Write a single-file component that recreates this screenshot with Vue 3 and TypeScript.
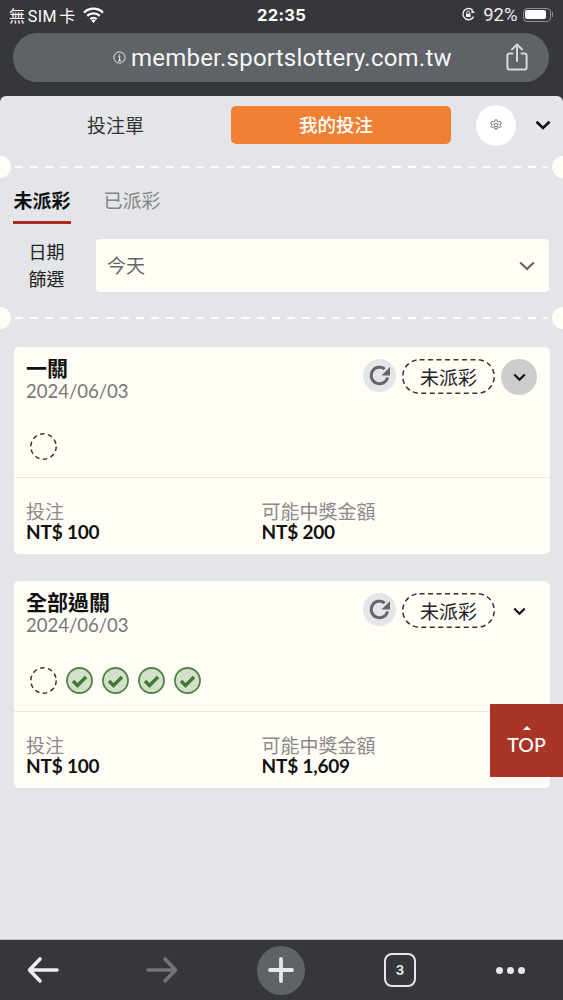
<script setup lang="ts">
interface Card { title: string; date: string; stake: string; prize: string; open: boolean; marks: boolean[] }
const cards: Card[] = [
  { title: '一關', date: '2024/06/03', stake: 'NT$ 100', prize: 'NT$ 200', open: true, marks: [false] },
  { title: '全部過關', date: '2024/06/03', stake: 'NT$ 100', prize: 'NT$ 1,609', open: false, marks: [false, true, true, true, true] },
]
</script>

<template>
  <div class="screen">
    <div class="chrome">
      <div class="status">
        <div class="status-left">
          <span class="carrier">無 SIM 卡</span>
          <svg class="wifi" width="21" height="16" viewBox="0 0 20 15"><path d="M1 5.200a12.800 12.800 0 0 1 18 0M4 8.400a8.600 8.600 0 0 1 12 0M7 11.400a4.300 4.300 0 0 1 6 0" fill="none" stroke="#fff" stroke-width="2.200"/><path d="M10 15l-2-2.200a2.800 2.800 0 0 1 4 0z" fill="#fff"/></svg>
        </div>
        <span class="clock">22:35</span>
        <div class="status-right">
          <svg width="15" height="15" viewBox="0 0 15 15"><path d="M12.600 9.600A5.600 5.600 0 1 1 11.600 3.200" fill="none" stroke="#eee" stroke-width="1.400"/><path d="M14 5.600l-3.600.6.2-3.600z" fill="#eee"/><rect x="5" y="6.500" width="4.600" height="3.600" rx=".6" fill="#eee"/><path d="M5.900 6.500v-1a1.400 1.400 0 0 1 2.800 0v1" fill="none" stroke="#eee"/></svg>
          <span class="pct">92%</span>
          <div class="battery"><div class="battery-fill"></div></div>
          <div class="battery-cap"></div>
        </div>
      </div>
      <div class="address">
        <svg width="13" height="13" viewBox="0 0 13 13" class="info"><circle cx="6.500" cy="6.500" r="5.600" fill="none" stroke="#e8e8e8" stroke-width="1"/><path d="M6.500 3.200v1.200M5.400 5.800h1.200v3.600M5.200 9.600h2.800" fill="none" stroke="#e8e8e8" stroke-width="1.100"/></svg>
        <span class="url">member.sportslottery.com.tw</span>
        <svg class="share" width="22" height="28" viewBox="0 0 22 28"><path d="M6.500 10.500H3.400A2 2 0 0 0 1.400 12.500v12a2 2 0 0 0 2 2h15.200a2 2 0 0 0 2-2v-12a2 2 0 0 0-2-2h-3.100M11 18V2M6 6.400 11 1.500l5 4.900" fill="none" stroke="#d8d9da" stroke-width="2" stroke-linecap="round" stroke-linejoin="round"/></svg>
      </div>
    </div>

    <main class="page">
      <div class="head">
        <span class="head-tab">投注單</span>
        <button class="head-active">我的投注</button>
        <div class="gear">
          <svg width="12" height="12" viewBox="0 0 24 24"><path d="M10 1.800h4l.7 3 2.300 1 2.700-1.600 2.500 3.200-2 2.300v2.600l2 2.300-2.500 3.200-2.700-1.600-2.300 1-.7 3h-4l-.7-3-2.300-1-2.700 1.600-2.500-3.200 2-2.300v-2.600l-2-2.300 2.500-3.200 2.700 1.600 2.300-1z" fill="none" stroke="#666" stroke-width="1.800" stroke-linejoin="round"/><circle cx="12" cy="12" r="3.600" fill="none" stroke="#666" stroke-width="1.800"/></svg>
        </div>
        <svg class="head-chev" width="16" height="10" viewBox="0 0 16 10"><path d="M1.500 1.800 8 8l6.500-6.200" fill="none" stroke="#111" stroke-width="2.600"/></svg>
      </div>

      <div class="perforation"><i class="hole hole-l"></i><i class="dash"></i><i class="hole hole-r"></i></div>

      <div class="tabs">
        <div class="tab tab-on">未派彩</div>
        <div class="tab">已派彩</div>
      </div>

      <div class="filter">
        <div class="filter-label">日期<br />篩選</div>
        <div class="select">
          <span class="select-text">今天</span>
          <svg width="16" height="10" viewBox="0 0 16 10"><path d="M1.200 1.500 8 8l6.800-6.500" fill="none" stroke="#666" stroke-width="2.200"/></svg>
        </div>
      </div>

      <div class="perforation perforation-2"><i class="hole hole-l"></i><i class="dash"></i><i class="hole hole-r"></i></div>

      <section class="cards">
        <article v-for="c in cards" :key="c.title" class="card">
          <div class="card-top">
            <div class="card-heading">
              <div>
                <div class="card-title">{{ c.title }}</div>
                <div class="card-date">{{ c.date }}</div>
              </div>
              <div class="card-actions">
                <div class="refresh">
                  <svg width="24" height="24" viewBox="0 0 24 24"><path d="M19.600 13.500A8.300 8.300 0 1 1 16.700 5" fill="none" stroke="#666" stroke-width="3"/><path d="M22 3v8.500h-8.500z" fill="#666"/></svg>
                </div>
                <div class="pill">
                  <svg class="pill-line" width="93" height="35" viewBox="0 0 93 35"><rect x=".75" y=".75" width="91.500" height="33.500" rx="16.750" fill="none" stroke="#333" stroke-width="1.500" stroke-dasharray="5 3.500"/></svg>
                  <span>未派彩</span>
                </div>
                <div class="toggle" :class="{ 'toggle-on': c.open }">
                  <svg width="13" height="9" viewBox="0 0 13 9"><path d="M1.300 1.500 6.500 6.800l5.200-5.300" fill="none" stroke="#111" stroke-width="2.200"/></svg>
                </div>
              </div>
            </div>
            <div class="marks">
              <template v-for="(m, i) in c.marks" :key="i">
                <svg v-if="m" class="mark" width="27" height="27" viewBox="0 0 27 27"><circle cx="13.500" cy="13.500" r="12.500" fill="#d5e0cb" stroke="#4f8443" stroke-width="1.800"/><path d="M7 14l4.500 4.500 8.500-8.500" fill="none" stroke="#3f7a35" stroke-width="3.400"/></svg>
                <svg v-else class="mark" width="27" height="27" viewBox="0 0 27 27"><circle cx="13.500" cy="13.500" r="12.700" fill="none" stroke="#333" stroke-width="1.500" stroke-dasharray="4.500 3.500"/></svg>
              </template>
            </div>
          </div>
          <div class="card-bottom">
            <div class="cell">
              <div class="cell-label">投注</div>
              <div class="cell-value">{{ c.stake }}</div>
            </div>
            <div class="cell">
              <div class="cell-label">可能中獎金額</div>
              <div class="cell-value">{{ c.prize }}</div>
            </div>
          </div>
        </article>
      </section>
    </main>

    <div class="top-btn">
      <i class="top-arrow"></i>
      <span>TOP</span>
    </div>

    <nav class="toolbar">
      <svg width="34" height="28" viewBox="0 0 34 28"><path d="M31 14H4M14 3 3.500 14 14 25" fill="none" stroke="#eceded" stroke-width="3.600" stroke-linecap="round" stroke-linejoin="round"/></svg>
      <svg width="34" height="28" viewBox="0 0 34 28"><path d="M3 14h27M20 3l10.500 11L20 25" fill="none" stroke="#727476" stroke-width="3.600" stroke-linecap="round" stroke-linejoin="round"/></svg>
      <div class="plus">
        <svg width="26" height="26" viewBox="0 0 26 26"><path d="M13 2v22M2 13h22" stroke="#e6e7e8" stroke-width="3.800" stroke-linecap="round"/></svg>
      </div>
      <div class="tabs-count">3</div>
      <div class="more"><i></i><i></i><i></i></div>
    </nav>
  </div>
</template>

<style scoped>
.screen {
  position: relative;
  width: 563px;
  height: 1000px;
  overflow: hidden;
  display: flex;
  flex-direction: column;
  background: #36373a;
  font-family: "Lato", "Noto Sans CJK TC", sans-serif;
}
.chrome {
  height: 96px;
  flex: none;
  background: #36373a;
  color: #fff;
  font-family: "Inter", "Noto Sans CJK TC", sans-serif;
}
.status {
  height: 33px;
  display: flex;
  align-items: center;
  justify-content: space-between;
  padding: 0 10px 4px 9px;
  box-sizing: border-box;
  position: relative;
}
.status-left { display: flex; align-items: center; gap: 7px; }
.carrier { font-size: 16px; font-family: "Roboto", "Noto Sans CJK TC", sans-serif; white-space: nowrap; word-spacing: -2px; letter-spacing: .4px; }
.clock {
  position: absolute;
  left: 257px;
  top: 5px;
  font-size: 16.500px;
  font-weight: 700;
  letter-spacing: .3px;
  line-height: 20px;
}
.status-right { display: flex; align-items: center; gap: 4px; }
.pct { font-size: 18.500px; margin-left: 3px; font-family: "Roboto", sans-serif; color: #eee; }
.battery {
  width: 28px;
  height: 14px;
  border: 1px solid #8e8f91;
  border-radius: 4px;
  padding: 1.500px;
  box-sizing: border-box;
  margin-left: 1px;
}
.battery-fill { width: 90%; height: 100%; background: #fff; border-radius: 2px; }
.battery-cap { width: 1.500px; height: 5px; background: #8e8f91; margin-left: -3px; }
.address {
  position: relative;
  height: 49px;
  margin: 0 14px 0 13px;
  border-radius: 25px;
  background: #5f6266;
  display: flex;
  align-items: center;
  padding-left: 100px;
  gap: 5px;
}
.url { font-size: 24px; font-family: "Roboto", sans-serif; color: #f6f6f6; white-space: nowrap; letter-spacing: .22px; }
.share { position: absolute; right: 21px; top: 10px; }
.page {
  flex: 1;
  background: #e3e5e8;
  border-radius: 6px 6px 0 0;
  display: flex;
  flex-direction: column;
  min-height: 0;
}
.head {
  height: 60px;
  display: flex;
  align-items: center;
  padding-bottom: 2px;
  box-sizing: border-box;
  flex: none;
}
.head-tab {
  width: 231px;
  padding-bottom: 2px;
  box-sizing: border-box;
  text-align: center;
  font-size: 19px;
  color: #333;
}
.head-active {
  width: 220px;
  height: 38px;
  border: 0;
  border-radius: 5px;
  background: #f08133;
  color: #fff;
  font: 500 18.500px "Noto Sans CJK TC", sans-serif;
  padding: 0 10px 2px 0;
}
.gear {
  width: 40px;
  height: 41px;
  border-radius: 50%;
  background: #fff;
  margin-left: 25px;
  display: flex;
  align-items: center;
  justify-content: center;
}
.head-chev { margin-left: 19px; }
.perforation {
  position: relative;
  height: 22px;
  flex: none;
}
.dash {
  position: absolute;
  left: 15px;
  right: 15px;
  top: 10px;
  height: 2px;
  background: repeating-linear-gradient(90deg, #fffdf6 0 8px, transparent 8px 15.100px);
}
.hole {
  position: absolute;
  top: 0;
  width: 22px;
  height: 22px;
  border-radius: 50%;
  background: #fffdf6;
}
.hole-l { left: -11px; }
.hole-r { right: -11px; }
.tabs {
  display: flex;
  gap: 32px;
  padding: 0 13px;
  height: 46px;
  box-sizing: border-box;
  flex: none;
}
.tab {
  width: 58px;
  height: 46px;
  font-size: 19px;
  line-height: 24px;
  padding-top: 11px;
  box-sizing: border-box;
  text-align: center;
  color: #858585;
  white-space: nowrap;
}
.tab-on {
  color: #111;
  font-weight: 700;
  border-bottom: 3.500px solid #b02a25;
}
.filter {
  display: flex;
  align-items: center;
  padding: 0 14px 0 0;
  margin-top: 15px;
  height: 53px;
  flex: none;
}
.filter-label {
  width: 96px;
  padding-right: 3px;
  box-sizing: border-box;
  text-align: center;
  font-size: 18px;
  line-height: 27px;
  color: #222;
}
.select {
  flex: 1;
  height: 53px;
  border-radius: 4px;
  background: #fffdf6;
  display: flex;
  align-items: center;
  justify-content: space-between;
  padding: 0 14px 0 11px;
  font-size: 19px;
  color: #666;
}
.select-text { padding-bottom: 3px; }
.perforation-2 { margin-top: 15px; }
.cards {
  padding: 18px 13.500px 0;
  display: flex;
  flex-direction: column;
  gap: 27px;
}
.card {
  background: #fffdf6;
  border-radius: 5px;
  height: 207px;
  display: flex;
  flex-direction: column;
}
.card-top {
  height: 131px;
  flex: none;
  border-bottom: 1.500px solid #e9e8e1;
  padding: 9px 12.500px 0;
  box-sizing: border-box;
}
.card-heading { display: flex; justify-content: space-between; }
.card-title { font-size: 21px; font-weight: 700; line-height: 24px; color: #111; }
.card-date { font-size: 18.500px; line-height: 20px; color: #777; margin-top: 1px; }
.card-actions { display: flex; align-items: flex-start; padding-top: 2px; }
.refresh {
  width: 33px;
  height: 33px;
  border-radius: 50%;
  background: #e3e5e8;
  display: flex;
  align-items: center;
  justify-content: center;
  margin: 1px 6px 0 0;
}
.pill {
  position: relative;
  width: 93px;
  height: 35px;
  display: flex;
  align-items: center;
  justify-content: center;
  font-size: 19px;
  color: #222;
  margin: 1px 6px 0 0;
}
.pill-line { position: absolute; left: 0; top: 0; }
.toggle {
  width: 36px;
  height: 36px;
  border-radius: 50%;
  display: flex;
  align-items: center;
  justify-content: center;
  margin-top: 1px;
}
.toggle-on { background: #cdcdcd; }
.marks {
  display: flex;
  gap: 8.900px;
  padding-left: 4px;
  margin-top: 32px;
}
.mark { flex: none; display: block; }
.card-bottom {
  display: flex;
  padding: 23px 12.500px 0;
}
.cell { width: 235.500px; }
.cell-label { font-size: 19px; line-height: 21px; color: #8a8a8a; white-space: nowrap; }
.cell-value { font-size: 19px; line-height: 20px; font-weight: 700; color: #111; letter-spacing: -.2px; }
.top-btn {
  position: absolute;
  left: 490px;
  top: 704px;
  width: 73px;
  height: 73px;
  background: #a93527;
  color: #fff;
  display: flex;
  flex-direction: column;
  align-items: center;
  justify-content: center;
  font-size: 19.500px;
  font-weight: 500;
  box-sizing: border-box;
}
.top-arrow {
  width: 0;
  height: 0;
  border-left: 4px solid transparent;
  border-right: 4px solid transparent;
  border-bottom: 4px solid #fff;
  margin-bottom: 3px;
}
.toolbar {
  height: 61px;
  flex: none;
  background: #36373a;
  border-top: 1px solid #c5c6c8;
  box-sizing: border-box;
  display: grid;
  grid-template-columns: 86px 152px 86px 152px 68px;
  align-items: center;
  justify-items: center;
}
.plus {
  width: 48px;
  height: 49px;
  border-radius: 50%;
  background: #5f6266;
  display: flex;
  align-items: center;
  justify-content: center;
}
.tabs-count {
  width: 32px;
  height: 34px;
  box-sizing: border-box;
  border: 2.500px solid #e6e7e8;
  border-radius: 8px;
  color: #e6e7e8;
  font: 700 13px "Inter", sans-serif;
  display: flex;
  align-items: center;
  justify-content: center;
}
.more { display: flex; gap: 4px; }
.more i { width: 7px; height: 7px; border-radius: 50%; background: #e6e7e8; }
</style>
